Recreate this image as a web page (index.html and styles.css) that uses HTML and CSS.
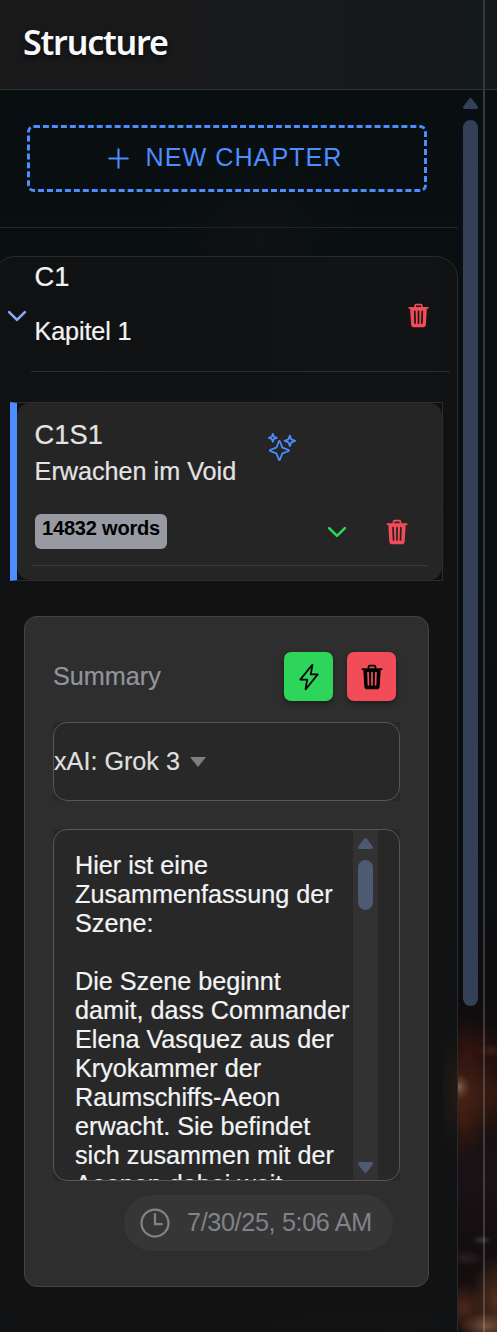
FILE: index.html
```html
<!DOCTYPE html>
<html lang="de">
<head>
<meta charset="utf-8">
<title>Structure</title>
<link rel="stylesheet" href="styles.css">
</head>
<body>
<svg class="defs" aria-hidden="true">
  <symbol id="trash" viewBox="0 0 512 512"><path fill="currentColor" d="M432 96h-96V72a40 40 0 00-40-40h-80a40 40 0 00-40 40v24H80a16 16 0 000 32h17l19 304.92c1.42 26.85 22 47.08 48 47.08h184c26.13 0 46.3-19.78 48-47l19-305h17a16 16 0 000-32zM192.57 416H192a16 16 0 01-16-15.43l-8-224a16 16 0 1132-1.14l8 224A16 16 0 01192.57 416zM272 400a16 16 0 01-32 0V176a16 16 0 0132 0zm32-304h-96V72a7.91 7.91 0 018-8h80a7.91 7.91 0 018 8zm32 304.57A16 16 0 01320 416h-.58A16 16 0 01304 399.43l8-224a16 16 0 1132 1.14z"/></symbol>
  <symbol id="chevron" viewBox="0 0 512 512"><path class="line bold" d="M112 184l144 144 144-144"/></symbol>
  <symbol id="arrow" viewBox="0 0 15 11"><path fill="currentColor" d="M6.2 .7Q7.5-.7 8.8 .7L14.6 8.3Q15.6 11 13.2 11H1.8Q-.6 11 .4 8.3Z"/></symbol>
</svg>
<div class="app">
  <aside class="sidebar">
    <header class="header"><h1>Structure</h1></header>
    <div class="body">
      <div class="content">
        <div class="toolbar">
          <button class="new-chapter">
            <svg class="add" viewBox="0 0 512 512"><path class="line" d="M256 112v288M400 256H112"/></svg>
            <span>NEW CHAPTER</span>
          </button>
        </div>
        <section class="chapter">
          <div class="chapter-head">
            <svg class="icon toggle" viewBox="0 0 512 512"><use href="#chevron"/></svg>
            <div class="chapter-text">
              <div class="code">C1</div>
              <div class="name">Kapitel 1</div>
            </div>
            <svg class="icon danger"><use href="#trash"/></svg>
          </div>
          <div class="scene">
            <div class="scene-inner">
              <div class="scene-top">
                <div>
                  <div class="code">C1S1</div>
                  <div class="scene-name">Erwachen im Void</div>
                </div>
                <svg class="sparkles" viewBox="0 0 512 512"><path class="line" d="M259.92 262.91L216.4 149.77a9 9 0 00-16.8 0l-43.52 113.14a9 9 0 01-5.17 5.17L37.77 311.6a9 9 0 000 16.8l113.14 43.52a9 9 0 015.17 5.17l43.52 113.14a9 9 0 0016.8 0l43.52-113.14a9 9 0 015.17-5.17l113.14-43.52a9 9 0 000-16.8l-113.14-43.52a9 9 0 01-5.17-5.17zM108 68L88 16 68 68 16 88l52 20 20 52 20-52 52-20-52-20zM426.67 117.33L400 48l-26.67 69.33L304 144l69.33 26.67L400 240l26.67-69.33L496 144l-69.33-26.67z"/></svg>
              </div>
              <div class="scene-bottom">
                <span class="badge">14832 words</span>
                <svg class="icon expand" viewBox="0 0 512 512"><use href="#chevron"/></svg>
                <svg class="icon danger large"><use href="#trash"/></svg>
              </div>
            </div>
          </div>
          <div class="details">
            <div class="summary">
              <div class="summary-head">
                <span class="label">Summary</span>
                <button class="action generate"><svg viewBox="0 0 512 512"><path class="line" d="M315.27 33L96 304h128l-31.51 173.23a2.36 2.36 0 002.33 2.77h0a2.36 2.36 0 001.89-.95L416 208H288l31.66-173.25a2.45 2.45 0 00-2.44-2.75h0a2.42 2.42 0 00-1.95 1z"/></svg></button>
                <button class="action remove"><svg><use href="#trash"/></svg></button>
              </div>
              <div class="field"><div class="select"><span>xAI: Grok 3</span><i class="caret"></i></div></div>
              <div class="field">
                <div class="textarea">
                  <div class="text">Hier ist eine<br>Zusammenfassung der<br>Szene:<br><br>Die Szene beginnt<br>damit, dass Commander<br>Elena Vasquez aus der<br>Kryokammer der<br>Raumschiffs-Aeon<br>erwacht. Sie befindet<br>sich zusammen mit der<br>Aeonen dabei weit</div>
                  <div class="scroll inner">
                    <svg class="arrow"><use href="#arrow"/></svg>
                    <div class="thumb"></div>
                    <svg class="arrow down"><use href="#arrow"/></svg>
                  </div>
                </div>
              </div>
              <div class="stamp">
                <svg viewBox="0 0 512 512"><path class="line" d="M256 64C150 64 64 150 64 256s86 192 192 192 192-86 192-192S362 64 256 64zM256 128v144h96"/></svg>
                <span>7/30/25, 5:06 AM</span>
              </div>
            </div>
          </div>
        </section>
      </div>
      <div class="scroll outer">
        <svg class="arrow"><use href="#arrow"/></svg>
        <div class="thumb"></div>
      </div>
    </div>
  </aside>
  <main class="page"><div class="page-head"></div></main>
</div>
</body>
</html>
```
FILE: styles.css
```css
* { box-sizing: border-box; }
body {
  margin: 0;
  height: 1332px;
  overflow: hidden;
  font: 25.2px/29px "Liberation Sans", Arial, sans-serif;
  color: #f3f4f6;
  background:
    radial-gradient(ellipse 11px 13px at 459px 1087px, #77644f, rgba(110, 80, 58, .5) 50%, transparent),
    radial-gradient(ellipse 38px 42px at 460px 1092px, #4c2416, transparent),
    radial-gradient(ellipse 36px 45px at 497px 1095px, #32160f, transparent),
    radial-gradient(ellipse 38px 34px at 468px 1052px, #34130f, transparent),
    radial-gradient(ellipse 14px 7px at 490px 1051px, #45231f, transparent),
    radial-gradient(ellipse 26px 40px at 464px 1120px, #35190f, transparent),
    radial-gradient(ellipse 26px 14px at 486px 1326px, #75503b, transparent),
    radial-gradient(ellipse 26px 26px at 464px 1308px, #4a281b, transparent),
    radial-gradient(ellipse 24px 46px at 495px 1300px, #52301f, transparent),
    radial-gradient(ellipse 10px 5px at 482px 1240px, #3a3031, transparent),
    radial-gradient(ellipse 18px 8px at 466px 1258px, #2a1d1f, transparent),
    radial-gradient(ellipse 100px 80px at 260px 240px, #0e1214, transparent),
    linear-gradient(#090e10, #0a0f12 500px, #0a0e10 800px, #0e0d0e 1000px, #170e0e 1080px, #1a1216 1180px, #130e10 1240px, #170e0d 1332px);
}
button { font: inherit; margin: 0; cursor: pointer; }
svg { display: block; flex: none; }
.defs { display: none; }
.line { fill: none; stroke: currentColor; stroke-width: 32; stroke-linecap: round; stroke-linejoin: round; }
.bold { stroke-width: 48; }
.app { display: flex; height: 1332px; }
.sidebar { width: 485px; flex: none; display: flex; flex-direction: column; border-right: 2px solid rgba(255, 255, 255, .18); }
.header {
  height: 90px;
  flex: none;
  padding: 17px 23px;
  border-bottom: 1px solid #303233;
  background: linear-gradient(90deg, #19191a, #18191a 60%, #14191c);
}
.header h1 {
  margin: 0;
  font: 600 34px/50px "Noto Sans", "Open Sans", sans-serif;
  letter-spacing: -1.2px;
  color: #f8f9fb;
  text-shadow: 0 2px 4px rgba(0, 0, 0, .6);
}
.body { display: flex; flex: 1; min-height: 0; }
.content { width: 458px; flex: none; overflow: hidden; }
.toolbar { height: 138px; padding: 35px 31px 0 27px; border-bottom: 1px solid #222627; }
.new-chapter {
  width: 400px;
  height: 67px;
  padding: 0 9px 2px 0;
  display: flex;
  align-items: center;
  justify-content: center;
  gap: 10px;
  border: 3px dashed #4c8dff;
  border-radius: 7px;
  background: none;
  color: #4c8dff;
  letter-spacing: 1px;
}
.add { width: 33px; height: 33px; margin-top: 2px; }
.chapter {
  margin: 28px 0 0 -7px;
  height: 1100px;
  border: 1px solid #282a2b;
  border-radius: 22px;
  background:
    radial-gradient(ellipse 22px 60px at 457px 1092px, #251a13, transparent) fixed,
    linear-gradient(90deg, #101112, #121314 90%, #101213);
}
.chapter-head {
  display: flex;
  align-items: center;
  margin: 0 7px 0 0;
  padding-left: 9px;
  height: 115px;
  background: linear-gradient(#2a2b2c, #2a2b2c) right bottom / 419px 1px no-repeat;
}
.icon { width: 28px; height: 28px; }
.toggle { color: #82adfb; margin: 2px 4px 0 0; }
.chapter-text { flex: 1; height: 115px; }
.code { font-size: 27.3px; line-height: 32px; margin-left: -.4px; }
.name, .scene-name { margin-left: -.4px; }
.chapter-text .code { margin-top: 4px; }
.name { margin-top: 24px; letter-spacing: -.15px; }
.name, .code, .scene-name, .text, .select, .label { -webkit-text-stroke: .2px currentColor; }
.danger { color: #f24c58; }
.chapter-head .danger { width: 27px; height: 27px; margin: 1px 18px 0 0; }
.scene {
  width: 433px;
  height: 179px;
  margin: 30px 0 0 16px;
  border: 1px solid #2d2d2d;
  border-left: 7px solid #4c8dff;
  background: #101010;
}
.scene-inner {
  height: 177px;
  padding: 15px 14px 0 18px;
  border-radius: 13px;
  color: #e3e3e4;
  background: linear-gradient(#3a3a3a, #3a3a3a) 14px 162px / 397px 1px no-repeat #252525;
}
.scene-top { display: flex; justify-content: space-between; height: 96px; padding-right: 132px; }
.scene-top .code { padding-top: 1px; }
.scene-name { margin-top: 6px; }
.sparkles { width: 28px; height: 28px; margin-top: 15px; color: #4c8dff; }
.scene-bottom { display: flex; align-items: center; height: 35px; }
.badge {
  width: 132px;
  height: 35px;
  padding-top: 3px;
  border-radius: 6px;
  background: #989aa2;
  color: #000;
  text-align: center;
  font-weight: 700;
  font-size: 20px;
  letter-spacing: -.2px;
  line-height: 23px;
}
.expand { margin-left: 156px; color: #2dd55b; }
.large { margin-left: 32px; }
.details { width: 433px; height: 730px; margin: 4px 0 0 16px; padding: 31px 14px 0; background: #121212; }
.summary {
  height: 671px;
  padding: 35px 28px 0;
  border: 1px solid #444;
  border-radius: 13px;
  background: #2e2e2e;
}
.summary-head { display: flex; align-items: center; height: 49px; gap: 14px; padding-right: 4px; }
.label { flex: 1; color: #92949c; }
.action {
  width: 49px;
  height: 49px;
  padding: 0;
  display: grid;
  place-items: center;
  border: 0;
  border-radius: 7px;
  color: #000;
  box-shadow: 0 3px 5px rgba(0, 0, 0, .35);
}
.action svg { width: 28px; height: 28px; }
.generate { background: #2dd55b; }
.remove { background: #f24c58; }
.field { background: #282828; margin-top: 21px; }
.field + .field { margin-top: 28px; }
.select, .textarea { display: flex; border: 1px solid #565656; border-radius: 14px; }
.select { height: 79px; align-items: center; gap: 10px; color: #dfdfdf; }
.caret { border: 8.5px solid transparent; border-top: 10px solid #7f7f7f; border-bottom: 0; }
.textarea { height: 352px; overflow: hidden; }
.text { width: 299px; flex: none; padding: 21px 0 0 21px; white-space: nowrap; }
.scroll { width: 25px; display: flex; flex-direction: column; align-items: center; }
.inner { background: #323232; color: #4d5a72; padding: 8px 0 7px; height: 350px; }
.outer { color: #334058; padding-top: 8px; }
.arrow { width: 15px; height: 11px; }
.down { transform: rotate(180deg); margin-top: auto; }
.thumb { width: 15px; border-radius: 8px; background: currentColor; margin-top: 11px; flex: none; }
.inner .thumb { height: 50px; }
.outer .thumb { height: 886px; }
.stamp {
  width: 269px;
  height: 56px;
  margin: 14px 0 0 71px;
  padding-left: 13px;
  display: flex;
  align-items: center;
  gap: 14px;
  border-radius: 28px;
  background: #363636;
  color: #81828a;
}
.stamp svg { width: 36px; height: 36px; }
.stamp span { white-space: nowrap; letter-spacing: -.35px; margin-top: -2px; }
.page { flex: 1; }
.page-head { height: 90px; border-bottom: 1px solid #303233; background: #14191b; }
```
